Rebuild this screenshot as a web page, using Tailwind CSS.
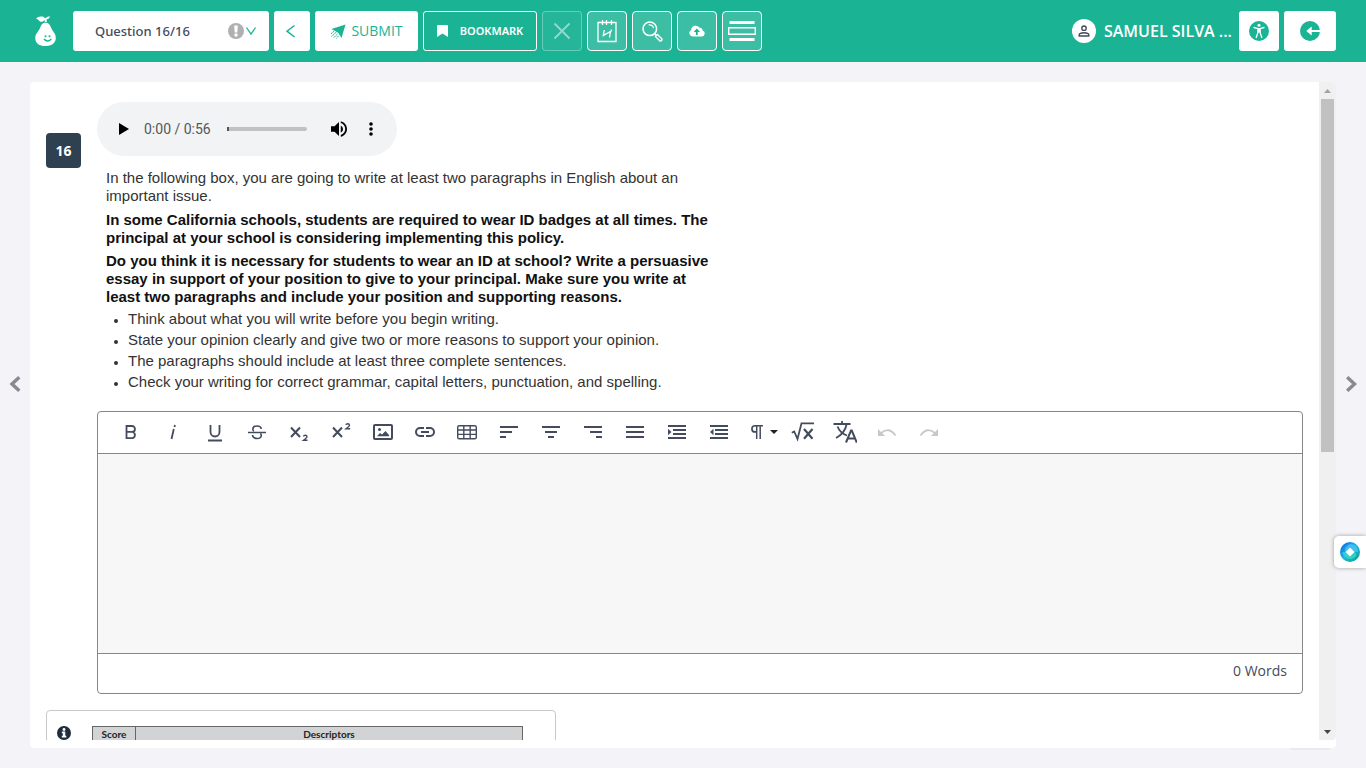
<!DOCTYPE html>
<html lang="en">
<head>
<meta charset="utf-8">
<meta name="viewport" content="width=device-width, initial-scale=1">
<title>Question 16/16</title>
<script src="https://cdn.jsdelivr.net/npm/@tailwindcss/browser@4"></script>
</head>
<body class="h-screen overflow-hidden flex flex-col bg-[#f3f3f8] font-['Open_Sans',sans-serif] text-[#434b5d]">

<header class="h-[62px] shrink-0 flex items-center gap-[5px] bg-[#1ab394] pl-[34px] pr-[30px]">
  <svg class="w-6 h-8 mr-[10px] shrink-0" viewBox="0 0 24 32" fill="#fff" aria-label="Pear logo" role="img">
    <path d="M2 3.500Q4.500 1 8 1.600Q10 1.400 11.200 3.600Q12.500 1.400 15.800 1.200Q15.800 3.500 12.800 4.300L12.600 7H10.800L10.600 5Q8.500 7.500 5.800 6.600Q4.800 4.300 2 3.500Z"/>
    <path d="M11.500 7.800C14.800 7.800 15.900 9.800 17.500 13.500C19 17 22 18.500 21.800 23.500C21.500 28.500 17 31 11.500 31C5.500 31 1.400 28.500 1.300 23.500C1.200 18.500 4.300 17 5.800 13.500C7.400 9.800 8.300 7.800 11.500 7.800Z"/>
    <path d="M10 24Q13.500 28.200 17.300 24" fill="none" stroke="#1ab394" stroke-width="1.500"/>
    <circle cx="11.500" cy="21.200" r="1" fill="#1ab394"/><circle cx="15.500" cy="21.200" r="1" fill="#1ab394"/>
  </svg>

  <div class="relative w-[196px] h-10 shrink-0">
    <select aria-label="Question" class="appearance-none w-full h-full rounded-[3px] bg-white pl-[22px] pt-px font-['Noto_Sans',sans-serif] text-[13px] font-medium text-[#434b5d]"><option>Question 16/16</option></select>
    <svg class="absolute right-[25px] top-3 w-4 h-4 pointer-events-none" viewBox="0 0 16 16"><circle cx="8" cy="8" r="8" fill="#b0b0b0"/><path d="M6.200 2.500h3.600L9.300 9.500H6.700z" fill="#fff"/><circle cx="8" cy="12" r="1.700" fill="#fff"/></svg>
    <svg class="absolute right-3 top-[14px] w-3 h-3 pointer-events-none" viewBox="0 0 12 12" fill="none" stroke="#1ab394" stroke-width="1.300"><path d="M1.500 2.500L6 9L10.500 2.500"/></svg>
  </div>
  <button aria-label="Previous question" class="w-9 h-10 shrink-0 rounded-[3px] bg-white flex items-center justify-center">
    <svg class="w-4 h-4 mr-1" viewBox="0 0 16 16" fill="none" stroke="#1ab394" stroke-width="1.500"><path d="M12.500 2.500L5 8.200L12.500 14"/></svg>
  </button>
  <button class="w-[103px] h-10 shrink-0 rounded-[3px] bg-white flex items-center justify-center gap-[5px] pb-px text-[14px] text-[#1ab394]">
    <svg class="w-4 h-4" viewBox="0 0 16 16"><path d="M15.500 1.500L11.500 15L8.200 9.700L1.500 6Z" fill="#1ab394"/><path d="M6.500 9L1.500 13.500M4 8.300L1 10.800M7.500 11L3.500 15M8.500 12.800L6.500 15.500" stroke="#1ab394" stroke-width="1" stroke-dasharray="2 .6"/></svg>
    SUBMIT
  </button>
  <button class="w-[114px] h-10 shrink-0 rounded-[3px] border border-white flex items-center justify-center gap-3 font-['Noto_Sans',sans-serif] text-[11px] font-semibold text-white">
    <svg class="w-[11px] h-3" viewBox="0 0 11 12" fill="#fff"><path d="M1 0h9q1 0 1 1v11L5.500 8.500L0 12V1q0-1 1-1z"/></svg>
    BOOKMARK
  </button>
  <button aria-label="Cross out" disabled class="w-10 h-10 shrink-0 rounded-[4px] border border-white/30 bg-white/5 flex items-center justify-center">
    <svg class="w-[18px] h-[18px]" viewBox="0 0 18 18" stroke="#fff" stroke-opacity=".5" stroke-width="1.800"><path d="M1.500 1.500L16.500 16.500M16.500 1.500L1.500 16.500"/></svg>
  </button>
  <button aria-label="Scratchpad" class="w-10 h-10 shrink-0 rounded-[4px] border border-white bg-white/15 flex items-center justify-center">
    <svg class="w-5 h-6" viewBox="0 0 20 24" fill="none" stroke="#fff" stroke-width="1.300"><path d="M1 3.500h18v19H1zM5.500 1v5M9.500 1v5M14.500 1v5"/><path d="M7.300 11L6.300 16.500L13.500 12.500L12.500 18.500M7 16.300L5.800 17M14.300 10.500v2"/></svg>
  </button>
  <button aria-label="Magnify" class="w-10 h-10 shrink-0 rounded-[4px] border border-white bg-white/15 flex items-center justify-center">
    <svg class="w-[21px] h-[21px]" viewBox="0 0 21 21" fill="none" stroke="#fff"><circle cx="7.800" cy="7.800" r="6.800" stroke-width="1.500"/><path d="M6.500 4Q10.800 3.300 11.500 7.200" stroke-width="1.200"/><path d="M12.600 12.600L14.300 14.300" stroke-width="1.500"/><path d="M13.500 15.500L15.500 13.500L20 18Q20 20 18 20Z" stroke-width="1.400"/></svg>
  </button>
  <button aria-label="Upload" class="w-10 h-10 shrink-0 rounded-[4px] border border-white bg-white/15 flex items-center justify-center">
    <svg class="w-4 h-3" viewBox="0 0 16 12"><path d="M3.800 11.500A3.500 3.500 0 0 1 2.200 4.900A4.500 4.500 0 0 1 10.500 2.800A2.500 2.500 0 0 1 13.500 5.600A3 3 0 0 1 12.800 11.500Z" fill="#fff"/><path d="M7.800 3.500L11 7H8.700v3H6.900V7H4.600z" fill="#1ab394"/></svg>
  </button>
  <button aria-label="Line reader" class="w-10 h-10 shrink-0 rounded-[4px] border border-white bg-white/15 flex items-center justify-center">
    <svg class="w-7 h-5" viewBox="0 0 28 20"><path d="M1.500 0h25v3h-25zM1.500 17h25v3h-25z" fill="#fff"/><path d="M.7 6.700h26.600v6.600H.7z" fill="none" stroke="#fff" stroke-width="1.400"/></svg>
  </button>

  <div class="ml-auto flex items-center gap-2 min-w-0 mr-[2px]">
    <svg class="w-6 h-6 shrink-0" viewBox="0 0 24 24"><circle cx="12" cy="12" r="12" fill="#fff"/><g fill="none" stroke="#434b5d" stroke-width="1.400"><circle cx="12" cy="9.200" r="2.200"/><path d="M7.200 17v-1.200Q7.500 13.700 12 13.700T16.800 15.800V17Z"/></g></svg>
    <span class="text-[16px] font-semibold text-white whitespace-nowrap">SAMUEL SILVA ...</span>
  </div>
  <button aria-label="Accessibility" class="w-10 h-10 shrink-0 rounded-[3px] bg-white flex items-center justify-center">
    <svg class="w-5 h-5" viewBox="0 0 20 20"><circle cx="10" cy="10" r="10" fill="#1ab394"/><circle cx="10" cy="4.300" r="1.500" fill="#fff"/><path d="M5 6.500L9 7.600H11L15 6.500M10 7.600V11M8.800 8V12L7.200 16.500M11.200 8V12L12.800 16.500" stroke="#fff" stroke-width="1.300" fill="none" stroke-linecap="round"/></svg>
  </button>
  <button aria-label="Exit" class="w-[52px] h-10 shrink-0 rounded-[3px] bg-white flex items-center justify-center">
    <svg class="w-5 h-5" viewBox="0 0 20 20"><circle cx="10" cy="10" r="10" fill="#1ab394"/><path d="M6.200 10L11.700 5.500V9H20V11H11.700V14.500Z" fill="#fff"/></svg>
  </button>
</header>

<div class="flex-1 min-h-0 flex">
  <button aria-label="Previous" class="w-[30px] shrink-0 flex items-center justify-center pb-[62px]">
    <svg class="w-3 h-4" viewBox="0 0 12 16" fill="none" stroke="#878a93" stroke-width="3.400"><path d="M10.300 1.200L3 8L10.300 14.800"/></svg>
  </button>

  <main class="relative flex-1 min-w-0 mt-5 mb-5">
    <div class="absolute -bottom-[2px] right-[5px] w-[42px] h-4 rounded-[4px] bg-[#e9e9ee]"></div>
    <div class="relative h-full bg-white rounded-[4px] pb-2 flex">
      <div class="flex-1 min-w-0 h-full overflow-hidden pt-5 px-4">
        <div class="flex gap-4">
          <div class="mt-[31px] w-[35px] h-[35px] shrink-0 rounded-[4px] bg-[#2f4050] text-white text-[14px] font-bold flex items-center justify-center">16</div>
          <div class="flex-1 min-w-0">
            <div class="w-[300px] h-[54px] rounded-full bg-[#f1f3f4] flex items-center pl-[22px] pr-[21px] font-[Roboto,sans-serif]">
              <button aria-label="Play"><svg class="w-[10px] h-3" viewBox="0 0 10 12"><path d="M0 0L10 6L0 12z"/></svg></button>
              <span class="ml-[15px] text-[14px] text-[#55585b] whitespace-nowrap">0:00 / 0:56</span>
              <input type="range" aria-label="Seek" min="0" max="56" value="0" class="ml-4 w-20 h-1 shrink-0 appearance-none rounded-full bg-[#c1c2c3] [&::-webkit-slider-thumb]:appearance-none [&::-webkit-slider-thumb]:w-[2px] [&::-webkit-slider-thumb]:h-1 [&::-webkit-slider-thumb]:bg-[#555]">
              <button aria-label="Mute" class="ml-6"><svg class="w-4 h-4" viewBox="3 3 18 18"><path d="M3 9v6h4l5 5V4L7 9H3zm13.500 3A4.500 4.500 0 0 0 14 7.970v8.050c1.480-.730 2.500-2.250 2.500-4.020zM14 3.230v2.060c2.890.860 5 3.540 5 6.710s-2.110 5.850-5 6.710v2.060c4.010-.910 7-4.490 7-8.770s-2.990-7.860-7-8.770z"/></svg></button>
              <button aria-label="More options" class="ml-auto"><svg class="w-[10px] h-[14px]" viewBox="0 0 10 14"><circle cx="5" cy="2" r="1.800"/><circle cx="5" cy="7" r="1.800"/><circle cx="5" cy="12" r="1.800"/></svg></button>
            </div>

            <div class="mt-[13px] ml-[9px] font-['Liberation_Sans',sans-serif] text-[15px] leading-[18px] text-[#333]">
              <p>In the following box, you are going to write at least two paragraphs in English about an<br>important issue.</p>
              <p class="mt-[6px] font-bold text-[#111]">In some California schools, students are required to wear ID badges at all times. The<br>principal at your school is considering implementing this policy.</p>
              <p class="mt-[5px] font-bold text-[#111]">Do you think it is necessary for students to wear an ID at school? Write a persuasive<br>essay in support of your position to give to your principal. Make sure you write at<br>least two paragraphs and include your position and supporting reasons.</p>
              <ul class="mt-[2px] pl-[22px] list-disc leading-[21px] marker:text-[12px]">
                <li>Think about what you will write before you begin writing.</li>
                <li>State your opinion clearly and give two or more reasons to support your opinion.</li>
                <li>The paragraphs should include at least three complete sentences.</li>
                <li>Check your writing for correct grammar, capital letters, punctuation, and spelling.</li>
              </ul>
            </div>

            <div class="mt-[19px] border border-[#868686] rounded-[4px]">
              <div role="toolbar" aria-label="Formatting" class="h-[42px] border-b border-[#868686] pl-3 pb-px flex items-stretch text-[#434b5d]">
                <button aria-label="Bold" class="w-[42px] flex items-center justify-center"><svg class="w-6 h-6" viewBox="0 0 24 24" fill="none" stroke="currentColor" stroke-width="1.800"><path d="M7.500 6h5.500a2.900 2.900 0 0 1 0 5.900H7.500zM7.500 11.900h6a3.200 3.200 0 0 1 0 6.200H7.500z"/></svg></button>
                <button aria-label="Italic" class="w-[42px] flex items-center justify-center"><svg class="w-6 h-6" viewBox="0 0 24 24" fill="none" stroke="currentColor" stroke-width="1.800"><path d="M12.800 9L10.500 19M13.900 5L13.500 7"/></svg></button>
                <button aria-label="Underline" class="w-[42px] flex items-center justify-center"><svg class="w-6 h-6" viewBox="0 0 24 24" fill="none" stroke="currentColor" stroke-width="1.800"><path d="M7.500 5v7a4.500 4.500 0 0 0 9 0V5M5 20.500h14"/></svg></button>
                <button aria-label="Strikethrough" class="w-[42px] flex items-center justify-center"><svg class="w-6 h-6" viewBox="0 0 24 24" fill="none" stroke="currentColor" stroke-width="1.600"><path d="M3 12.500h18M16.200 9Q16 6 12 6T7.800 9Q7.800 10.700 9 11M7.500 15Q8 18.500 12 18.500T16.300 15.500Q16.300 14.500 15.500 13.500"/></svg></button>
                <button aria-label="Subscript" class="w-[42px] flex items-center justify-center"><svg class="w-6 h-6" viewBox="0 0 24 24" fill="none" stroke="currentColor"><path d="M4 7.500L13 17M13 7.500L4 17" stroke-width="2"/><path d="M16.500 16.500Q16.700 15.300 18.300 15.300T20 16.700Q20 17.500 16.500 20.300H20.500" stroke-width="1.400"/></svg></button>
                <button aria-label="Superscript" class="w-[42px] flex items-center justify-center"><svg class="w-6 h-6" viewBox="0 0 24 24" fill="none" stroke="currentColor"><path d="M4 7.500L13 17M13 7.500L4 17" stroke-width="2"/><path d="M17 5Q17.200 3.700 18.800 3.700T20.500 5.200Q20.500 6 17 8.800H21.200" stroke-width="1.400"/></svg></button>
                <button aria-label="Insert image" class="w-[42px] flex items-center justify-center"><svg class="w-6 h-6" viewBox="0 0 24 24"><rect x="3" y="5" width="18" height="14" rx="1" fill="none" stroke="currentColor" stroke-width="2"/><circle cx="8.500" cy="9.500" r="1.500" fill="currentColor"/><path d="M6 16.200L9 13L11 14.500L14.500 11L18 15V16.200Z" fill="currentColor"/></svg></button>
                <button aria-label="Insert link" class="w-[42px] flex items-center justify-center"><svg class="w-6 h-6" viewBox="0 0 24 24" fill="none" stroke="currentColor" stroke-width="2"><path d="M11 8H7a4 4 0 0 0 0 8h4M13 8h4a4 4 0 0 1 0 8h-4M8 12h8"/></svg></button>
                <button aria-label="Insert table" class="w-[42px] flex items-center justify-center"><svg class="w-6 h-6" viewBox="0 0 24 24" fill="none" stroke="currentColor" stroke-width="1.400"><rect x="2.700" y="5.700" width="18.600" height="13" rx="1.500"/><path d="M2.700 10h18.600M2.700 14.400h18.600M8.800 5.700v13M15.200 5.700v13"/></svg></button>
                <button aria-label="Align left" class="w-[42px] flex items-center justify-center"><svg class="w-6 h-6" viewBox="0 0 24 24" fill="none" stroke="currentColor" stroke-width="2"><path d="M3 7h18M3 12h12M3 17h6"/></svg></button>
                <button aria-label="Align center" class="w-[42px] flex items-center justify-center"><svg class="w-6 h-6" viewBox="0 0 24 24" fill="none" stroke="currentColor" stroke-width="2"><path d="M3 7h18M6 12h12M9 17h6"/></svg></button>
                <button aria-label="Align right" class="w-[42px] flex items-center justify-center"><svg class="w-6 h-6" viewBox="0 0 24 24" fill="none" stroke="currentColor" stroke-width="2"><path d="M3 7h18M9 12h12M15 17h6"/></svg></button>
                <button aria-label="Justify" class="w-[42px] flex items-center justify-center"><svg class="w-6 h-6" viewBox="0 0 24 24" fill="none" stroke="currentColor" stroke-width="2"><path d="M3 7h18M3 12h18M3 17h18"/></svg></button>
                <button aria-label="Increase indent" class="w-[42px] flex items-center justify-center"><svg class="w-6 h-6" viewBox="0 0 24 24"><path d="M3 6h18M8 10h13M8 14h13M3 18h18" fill="none" stroke="currentColor" stroke-width="2"/><path d="M3 8.800L6.500 12L3 15.200z" fill="currentColor"/></svg></button>
                <button aria-label="Decrease indent" class="w-[42px] flex items-center justify-center"><svg class="w-6 h-6" viewBox="0 0 24 24"><path d="M3 6h18M8 10h13M8 14h13M3 18h18" fill="none" stroke="currentColor" stroke-width="2"/><path d="M6.500 8.800L3 12L6.500 15.200z" fill="currentColor"/></svg></button>
                <button aria-label="Paragraph format" class="w-[42px] pl-[6px] flex items-center justify-center gap-[6px]"><svg class="w-[14px] h-4" viewBox="0 0 14 16"><path d="M5.500 1.700h7.500M6.700 1.500V15M10.200 1.500V15" fill="none" stroke="currentColor" stroke-width="1.500"/><path d="M6.700 1H5A3.800 3.800 0 0 0 5 8.800H6.700V7H5A2 2 0 0 1 5 2.500H6.700z" fill="currentColor"/></svg><svg class="w-2 h-1" viewBox="0 0 8 4"><path d="M0 0h8L4 4z" fill="#222"/></svg></button>
                <button aria-label="Insert math" class="w-[42px] flex items-center justify-center"><svg class="w-6 h-6" viewBox="0 0 24 24" fill="none" stroke="currentColor"><path d="M.8 12.800L3.200 11.500L6.500 19L10.500 3.300H23" stroke-width="1.800"/><path d="M13 9L21.500 18.700M21.500 9L13 18.700" stroke-width="2.200"/></svg></button>
                <button aria-label="Language" class="w-[42px] flex items-center justify-center"><svg class="w-6 h-6" viewBox="0 0 24 24" fill="none" stroke="currentColor" stroke-width="1.800"><path d="M.5 4H17.500M9 1v3M4.500 6.500Q7 13 14 15.500M13.500 4.500Q12 13 3 18"/><path d="M13 22.500L18 10.500H18.800L23.800 22.500M14.700 18.500h7.500" stroke-width="2"/></svg></button>
                <button aria-label="Undo" disabled class="w-[42px] flex items-center justify-center text-[#c6c8ce]"><svg class="w-6 h-6" viewBox="0 0 24 24"><path d="M5.500 13.500Q14 6 20.500 15.500" fill="none" stroke="currentColor" stroke-width="1.800"/><path d="M3 9V16H10z" fill="currentColor"/></svg></button>
                <button aria-label="Redo" disabled class="w-[42px] flex items-center justify-center text-[#c6c8ce]"><svg class="w-6 h-6" viewBox="0 0 24 24"><path d="M18.500 13.500Q10 6 3.500 15.500" fill="none" stroke="currentColor" stroke-width="1.800"/><path d="M21 9V16H14z" fill="currentColor"/></svg></button>
              </div>
              <textarea aria-label="Essay response" class="block w-full h-[199px] resize-none bg-[#f7f7f7] p-3 outline-none rounded-[4px]"></textarea>
              <div class="h-10 border-t border-[#868686] pr-[15px] pb-[6px] flex items-center justify-end text-[14px]">0 Words</div>
            </div>
          </div>
        </div>

        <section class="mt-4 w-[510px] max-w-full h-40 rounded-[4px] border border-[#c9c9c9] pt-[15px] pl-[10px] flex items-start gap-[20px]">
          <svg class="w-[14px] h-[14px] mr-[2px] shrink-0" viewBox="0 0 14 14"><circle cx="7" cy="7" r="7" fill="#1f2d3d"/><circle cx="7" cy="3.500" r="1.400" fill="#fff"/><path d="M4.800 5.500h3.500v4.300h1v1.700H4.800V9.800h1V7.200h-1z" fill="#fff"/></svg>
          <table class="w-[431px] ml-[-1px] border-collapse bg-[#d2d3d5] font-[Lato,sans-serif] text-[10px] leading-[15px] text-[#222]">
            <thead><tr><th class="w-[43px] border border-[#666]">Score</th><th class="border border-[#666]">Descriptors</th></tr></thead>
          </table>
        </section>
      </div>

      <div class="w-[17px] shrink-0 bg-[#f0f0f0] rounded-r-[4px] flex flex-col items-center" aria-hidden="true">
        <div class="h-[17px] flex items-center"><svg class="w-[7px] h-1" viewBox="0 0 7 4"><path d="M3.500 0L7 4H0z" fill="#a3a3a3"/></svg></div>
        <div class="w-[13px] h-[353px] bg-[#c1c1c1]"></div>
        <div class="mt-auto h-[17px] flex items-center"><svg class="w-[7px] h-1" viewBox="0 0 7 4"><path d="M0 0h7L3.500 4z" fill="#444"/></svg></div>
      </div>
    </div>
  </main>

  <button aria-label="Next" class="w-[30px] shrink-0 flex items-center justify-center pb-[62px]">
    <svg class="w-3 h-4" viewBox="0 0 12 16" fill="none" stroke="#878a93" stroke-width="3.400"><path d="M2.200 1.200L9.500 8L2.200 14.800"/></svg>
  </button>
</div>

<button aria-label="Assistant" class="fixed right-0 top-[536px] w-8 h-8 rounded-l-[5px] bg-white shadow-[0_0_4px_rgba(0,0,0,0.35)] flex items-center justify-center">
  <svg class="w-5 h-5" viewBox="0 0 20 20"><defs><linearGradient id="a" x1="0" y1="0" x2="1" y2="1"><stop offset="0" stop-color="#0b5fe0"/><stop offset=".5" stop-color="#20b8e8"/><stop offset="1" stop-color="#0a9c70"/></linearGradient></defs><circle cx="10" cy="10" r="10" fill="url(#a)"/><path d="M10 2A8 8 0 0 1 18 10L14.500 10L10 5.500L5.500 10Q3 5 10 2Z" fill="#4cc4f5" opacity=".75"/><path d="M2 10L5.500 10L10 14.500L14.500 10Q19 14 12 17Q5 18 2 10Z" fill="#35e0c8" opacity=".7"/><path d="M10 5.500L14.500 10L10 14.500L5.500 10z" fill="#fff"/></svg>
</button>
</body>
</html>
